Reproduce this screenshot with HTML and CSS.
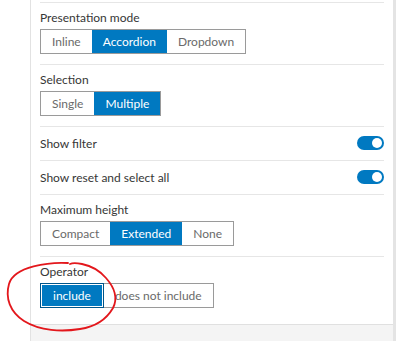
FILE: index.html
```html
<!DOCTYPE html>
<html lang="en">
<head>
  <meta charset="UTF-8" />
  <title>Filter settings</title>
  <link rel="stylesheet" href="styles.css">
</head>
<body>
  <div class="page">
    <div class="panel">
      <div class="panel-body">
        <div class="section">
          <div class="label">Presentation mode</div>
          <div class="segmented">
            <button class="seg">Inline</button>
            <button class="seg active">Accordion</button>
            <button class="seg">Dropdown</button>
          </div>
        </div>

        <div class="section">
          <div class="label">Selection</div>
          <div class="segmented">
            <button class="seg">Single</button>
            <button class="seg active">Multiple</button>
          </div>
        </div>

        <div class="row">
          <span>Show filter</span>
          <span class="toggle on"><span class="knob"></span></span>
        </div>

        <div class="row">
          <span>Show reset and select all</span>
          <span class="toggle on"><span class="knob"></span></span>
        </div>

        <div class="section">
          <div class="label">Maximum height</div>
          <div class="segmented">
            <button class="seg">Compact</button>
            <button class="seg active">Extended</button>
            <button class="seg">None</button>
          </div>
        </div>

        <div class="section last">
          <div class="label">Operator</div>
          <div class="segmented">
            <button class="seg active focused">include</button>
            <button class="seg">does not include</button>
          </div>
        </div>
      </div>
      <div class="panel-footer"></div>
    </div>
    <div class="scroll-edge"></div>

    <!-- hand drawn annotation -->
    <svg class="scribble" viewBox="0 0 400 341" width="400" height="341">
      <path d="M68 263 C 50 262, 14 266, 9 284 C 5 298, 10 312, 24 321 C 40 331, 62 332, 80 329 C 94 327, 106 320, 113 308 C 118 298, 114 287, 106 278 C 100 271, 92 266, 82 264 C 77 263, 72 263, 70 264"
            fill="none" stroke="#e3171c" stroke-width="1.8" stroke-linecap="round"/>
    </svg>
  </div>
</body>
</html>
```

FILE: styles.css
```css
* {
  margin: 0;
  padding: 0;
  box-sizing: border-box;
}

body {
  font-family: Lato, "Noto Sans", sans-serif;
  font-size: 12px;
  color: #363636;
  background: #fff;
  width: 400px;
  height: 341px;
  overflow: hidden;
}

.page {
  position: relative;
  display: flex;
  height: 341px;
  padding-left: 30px;
}

.panel {
  width: 363px;
  display: flex;
  flex-direction: column;
  border-left: 1px solid #e2e2e2;
}

.panel-body {
  padding: 2px 9px 0 9px;
}

.section {
  border-top: 1px solid #e6e6e6;
  padding: 7px 0 10px;
}

.section.last {
  padding-bottom: 16px;
}

.label {
  line-height: 16px;
  margin-bottom: 3px;
}

.segmented {
  display: inline-flex;
  border: 1px solid #9a9a9a;
  height: 25px;
}

.seg {
  font: inherit;
  font-size: 12px;
  color: #6a6a6a;
  background: #fff;
  border: none;
  padding: 0 11px;
  height: 100%;
}

.seg.active {
  background: #0079c1;
  color: #fff;
}

.seg.focused {
  border: 1px solid #00558a;
  box-shadow: inset 0 0 0 1px #fff;
  margin: -1px 0 -1px -1px;
  height: 25px;
  padding: 0 12px;
}

.row {
  border-top: 1px solid #e6e6e6;
  display: flex;
  align-items: center;
  justify-content: space-between;
  height: 34px;
  padding-bottom: 1px;
}

.toggle {
  width: 27px;
  height: 14px;
  border-radius: 7px;
  background: #0079c1;
  display: flex;
  align-items: center;
  justify-content: flex-end;
  padding-right: 2px;
}

.knob {
  width: 10px;
  height: 10px;
  border-radius: 50%;
  background: #fff;
}

.panel-footer {
  flex: 1;
  border-top: 1px solid #e0e0e0;
  background: #f4f4f4;
}

.scroll-edge {
  width: 3px;
  background: #e4e4e4;
}

.scribble {
  position: absolute;
  left: 0;
  top: 0;
  pointer-events: none;
}
```
